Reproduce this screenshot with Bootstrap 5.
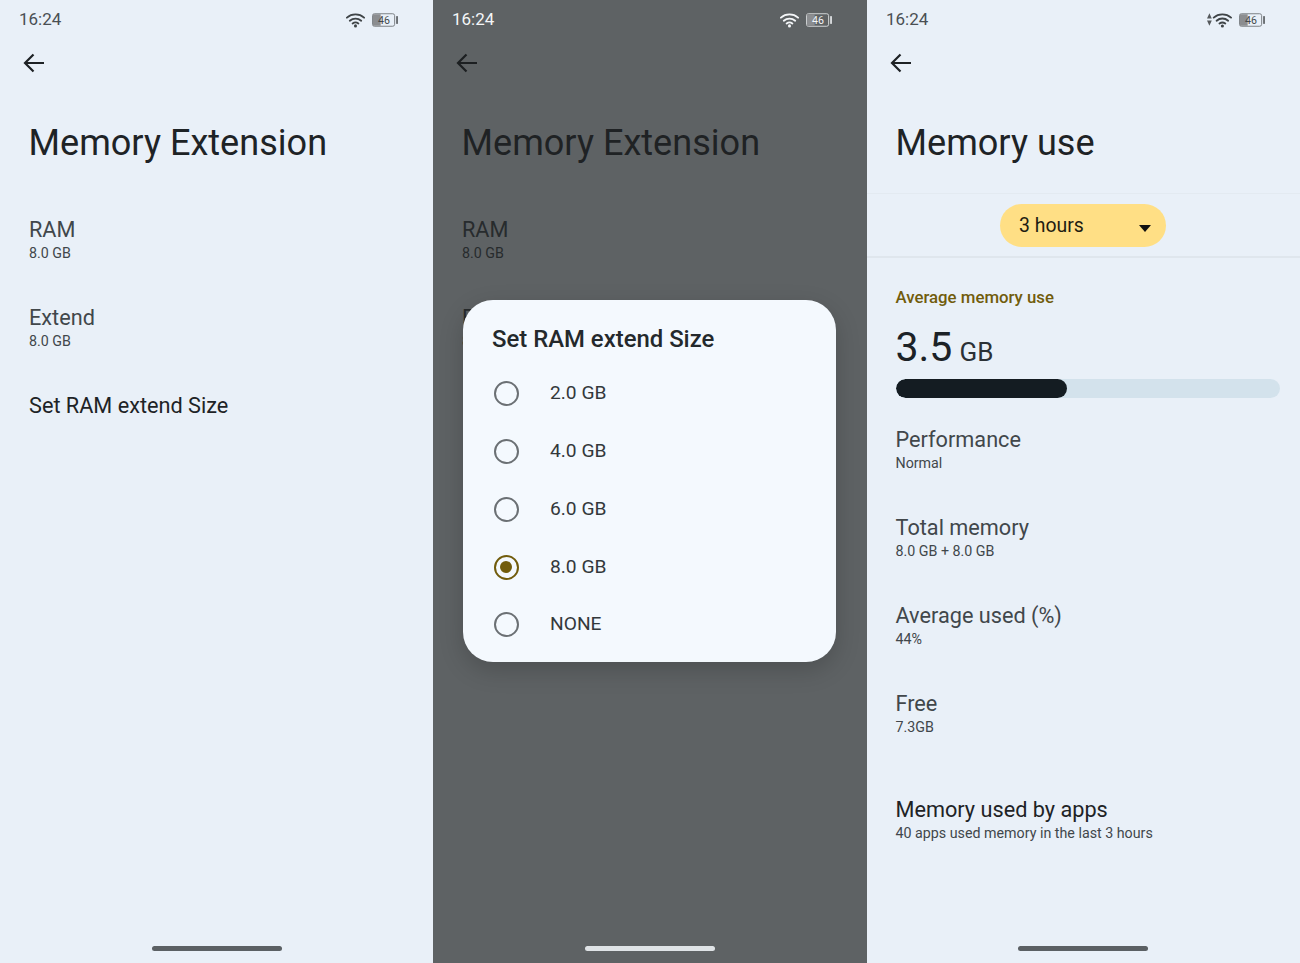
<!DOCTYPE html>
<html lang="en">
<head>
    <meta charset="UTF-8">
    <meta name="viewport" content="width=device-width, initial-scale=1.0">
    <title>Memory settings</title>
    <link href="https://cdn.jsdelivr.net/npm/bootstrap@5.3.2/dist/css/bootstrap.min.css" rel="stylesheet">
    <style>
        body { font-family: Roboto, "Liberation Sans", sans-serif; background: #e9f0f8; width: 1300px; height: 963px; overflow: hidden; }
        .phone { height: 963px; background: #e9f0f8; color: #1e2326; position: relative; overflow: hidden; }
        .phone-a { width: 433px; }
        .phone-b { width: 434px; background: #5e6264; color: #1f2224; }
        .phone-c { width: 433px; }
        .status-bar { height: 39px; padding: 0 35px 0 19px; font-size: 17px; color: #4a4f53; }
        .phone-b .status-bar { color: #f4f6f8; }
        .status-icons { gap: 7px; }
        .back-row { height: 47px; padding-left: 21px; }
        .page-title { font-size: 36.1px; font-weight: 400; line-height: 42px; margin: 36px 0 0 28.5px; }
        .rows { margin-top: 42px; }
        .info-row { height: 88px; padding: 10px 29px 0; }
        .info-name { font-size: 21.7px; line-height: 28px; color: #41474b; }
        .info-sub { font-size: 14.25px; line-height: 20px; margin-top: -1px; color: #41474b; }
        .info-dark { color: #1e2326; }
        .phone-b .info-name, .phone-b .info-sub { color: #272b2d; }
        .home-bar { position: absolute; left: 152px; bottom: 12px; width: 130px; height: 5px; border-radius: 3px; background: #5b6064; }
        .phone-c .home-bar { left: 151px; }
        .phone-b .home-bar { background: #dfe3e6; }
        .dialog-box { position: absolute; left: 30px; top: 300px; width: 373px; height: 362px; background: #f4f9fe; border-radius: 30px; padding: 24px 29px; box-shadow: 0 8px 24px rgba(0,0,0,.18); }
        .dialog-title { font-size: 23.9px; font-weight: 500; line-height: 30px; margin-bottom: 11px; color: #24292c; }
        .radio-row { height: 57.75px; gap: 31px; font-size: 19.2px; color: #33383b; padding-left: 2px; }
        .radio-ring { width: 25px; height: 25px; border: 2.5px solid #6b7074; border-radius: 50%; flex: none; }
        .radio-on { border-color: #715c0c; padding: 4px; }
        .radio-on span { display: block; width: 12px; height: 12px; border-radius: 50%; background: #715c0c; }
        .pill-band { height: 65px; margin-top: 29px; padding-right: 1px; border-top: 1px solid #e3eaf1; border-bottom: 2px solid #dfe6ed; }
        .time-pill { width: 166px; height: 43px; background: #ffdf85; border-radius: 22px; padding: 0 15px 0 19px; font-size: 19.4px; color: #1e1c12; }
        .pill-text { padding-top: 2px; }
        .pill-caret { width: 0; height: 0; border-left: 6.5px solid transparent; border-right: 6.5px solid transparent; border-top: 7px solid #111; margin-top: 7px; }
        .summary { padding: 29px 20px 0 28.5px; }
        .summary-label { font-size: 16.8px; font-weight: 500; line-height: 20px; color: #715c0c; }
        .summary-value { font-size: 41px; line-height: 47px; margin-top: 17px; color: #1c2227; word-spacing: -3px; }
        .summary-unit { font-size: 26px; color: #2b3136; }
        .mem-track { height: 19px; background: #d3e2ec; border-radius: 10px; margin-top: 3px; overflow: hidden; }
        .mem-fill { height: 100%; background: #141c22; border-radius: 10px; }
        .rows-c { margin-top: 19px; }
        .rows-c .info-row { padding: 9px 28.5px 0; }
        .rows-c .apps-row { margin-top: 18px; }
        .phone-c .apps-row .info-name { color: #1e2326; }
    </style>
</head>
<body>
    <div class="d-flex">
        <!-- left: memory extension -->
        <div class="phone phone-a">
            <div class="status-bar d-flex align-items-center justify-content-between">
                <span>16:24</span>
                <span class="status-icons d-flex align-items-center">
                    <svg width="19" height="16" viewBox="0 0 20 16" fill="none" stroke="#3f4447" stroke-width="2" stroke-linecap="round"><path d="M1 5.5C6 1 14 1 19 5.5"/><path d="M4 8.7C7.5 5.8 12.5 5.8 16 8.7"/><path d="M7 11.6C8.8 10.3 11.2 10.3 13 11.6"/><circle cx="10" cy="14.2" r="1.6" fill="#3f4447" stroke="none"/></svg>
                    <svg width="26" height="14" viewBox="0 0 27 14"><rect x=".5" y=".5" width="23" height="13" rx="2" fill="none" stroke="#7a7f83"/><path d="M1 1h8v12H1z" fill="#8b8d90"/><rect x="25" y="3" width="2" height="8" fill="#6b7074"/><text x="12.5" y="11" font-size="11" text-anchor="middle" fill="#44494c" font-family="Roboto, sans-serif">46</text></svg>
                </span>
            </div>
            <div class="back-row d-flex align-items-center">
                <svg width="26" height="26" viewBox="0 0 26 26" fill="none" stroke="#1e2225" stroke-width="2.2"><path d="M23 13H4M12.5 4.5 4 13l8.5 8.5"/></svg>
            </div>
            <h1 class="page-title">Memory Extension</h1>
            <div class="rows">
                <div class="info-row"><div class="info-name">RAM</div><div class="info-sub">8.0 GB</div></div>
                <div class="info-row"><div class="info-name">Extend</div><div class="info-sub">8.0 GB</div></div>
                <div class="info-row"><div class="info-name info-dark">Set RAM extend Size</div></div>
            </div>
            <div class="home-bar"></div>
        </div>

        <!-- middle: size dialog -->
        <div class="phone phone-b">
            <div class="status-bar d-flex align-items-center justify-content-between">
                <span>16:24</span>
                <span class="status-icons d-flex align-items-center">
                    <svg width="19" height="16" viewBox="0 0 20 16" fill="none" stroke="#f4f6f8" stroke-width="2" stroke-linecap="round"><path d="M1 5.5C6 1 14 1 19 5.5"/><path d="M4 8.7C7.5 5.8 12.5 5.8 16 8.7"/><path d="M7 11.6C8.8 10.3 11.2 10.3 13 11.6"/><circle cx="10" cy="14.2" r="1.6" fill="#f4f6f8" stroke="none"/></svg>
                    <svg width="26" height="14" viewBox="0 0 27 14"><rect x=".5" y=".5" width="23" height="13" rx="2" fill="none" stroke="#d5d8da"/><path d="M1 1h8v12H1z" fill="#8b8d90"/><rect x="25" y="3" width="2" height="8" fill="#d5d8da"/><text x="12.5" y="11" font-size="11" text-anchor="middle" fill="#f4f6f8" font-family="Roboto, sans-serif">46</text></svg>
                </span>
            </div>
            <div class="back-row d-flex align-items-center">
                <svg width="26" height="26" viewBox="0 0 26 26" fill="none" stroke="#1c1f21" stroke-width="2.2"><path d="M23 13H4M12.5 4.5 4 13l8.5 8.5"/></svg>
            </div>
            <h1 class="page-title">Memory Extension</h1>
            <div class="rows">
                <div class="info-row"><div class="info-name">RAM</div><div class="info-sub">8.0 GB</div></div>
                <div class="info-row"><div class="info-name">Extend</div><div class="info-sub">8.0 GB</div></div>
            </div>
            <div class="dialog-box">
                <div class="dialog-title">Set RAM extend Size</div>
                <div class="radio-row d-flex align-items-center"><span class="radio-ring"></span>2.0 GB</div>
                <div class="radio-row d-flex align-items-center"><span class="radio-ring"></span>4.0 GB</div>
                <div class="radio-row d-flex align-items-center"><span class="radio-ring"></span>6.0 GB</div>
                <div class="radio-row d-flex align-items-center"><span class="radio-ring radio-on"><span></span></span>8.0 GB</div>
                <div class="radio-row d-flex align-items-center"><span class="radio-ring"></span>NONE</div>
            </div>
            <div class="home-bar"></div>
        </div>

        <!-- right: memory use -->
        <div class="phone phone-c">
            <div class="status-bar d-flex align-items-center justify-content-between">
                <span>16:24</span>
                <span class="status-icons d-flex align-items-center">
                    <svg width="25" height="16" viewBox="0 0 26 16" fill="none" stroke="#3f4447" stroke-width="2" stroke-linecap="round"><path d="M0 6.5 2.5 1 5 6.5zM0 8.5 2.5 14 5 8.5z" fill="#55595c" stroke="none"/><path d="M7 5.5C12 1 20 1 25 5.5"/><path d="M10 8.7C13.5 5.8 18.5 5.8 22 8.7"/><path d="M13 11.6C14.8 10.3 17.2 10.3 19 11.6"/><circle cx="16" cy="14.2" r="1.6" fill="#3f4447" stroke="none"/></svg>
                    <svg width="26" height="14" viewBox="0 0 27 14"><rect x=".5" y=".5" width="23" height="13" rx="2" fill="none" stroke="#7a7f83"/><path d="M1 1h8v12H1z" fill="#8b8d90"/><rect x="25" y="3" width="2" height="8" fill="#6b7074"/><text x="12.5" y="11" font-size="11" text-anchor="middle" fill="#44494c" font-family="Roboto, sans-serif">46</text></svg>
                </span>
            </div>
            <div class="back-row d-flex align-items-center">
                <svg width="26" height="26" viewBox="0 0 26 26" fill="none" stroke="#1e2225" stroke-width="2.2"><path d="M23 13H4M12.5 4.5 4 13l8.5 8.5"/></svg>
            </div>
            <h1 class="page-title">Memory use</h1>
            <div class="pill-band d-flex align-items-center justify-content-center">
                <div class="time-pill d-flex align-items-center justify-content-between">
                    <span class="pill-text">3 hours</span><span class="pill-caret"></span>
                </div>
            </div>
            <div class="summary">
                <div class="summary-label">Average memory use</div>
                <div class="summary-value">3.5 <span class="summary-unit">GB</span></div>
                <div class="mem-track"><div class="mem-fill" style="width: 44.5%"></div></div>
            </div>
            <div class="rows-c">
                <div class="info-row"><div class="info-name">Performance</div><div class="info-sub">Normal</div></div>
                <div class="info-row"><div class="info-name">Total memory</div><div class="info-sub">8.0 GB + 8.0 GB</div></div>
                <div class="info-row"><div class="info-name">Average used (%)</div><div class="info-sub">44%</div></div>
                <div class="info-row"><div class="info-name">Free</div><div class="info-sub">7.3GB</div></div>
                <div class="info-row apps-row"><div class="info-name">Memory used by apps</div><div class="info-sub">40 apps used memory in the last 3 hours</div></div>
            </div>
            <div class="home-bar"></div>
        </div>
    </div>
    <script src="https://cdn.jsdelivr.net/npm/bootstrap@5.3.2/dist/js/bootstrap.bundle.min.js"></script>
</body>
</html>
